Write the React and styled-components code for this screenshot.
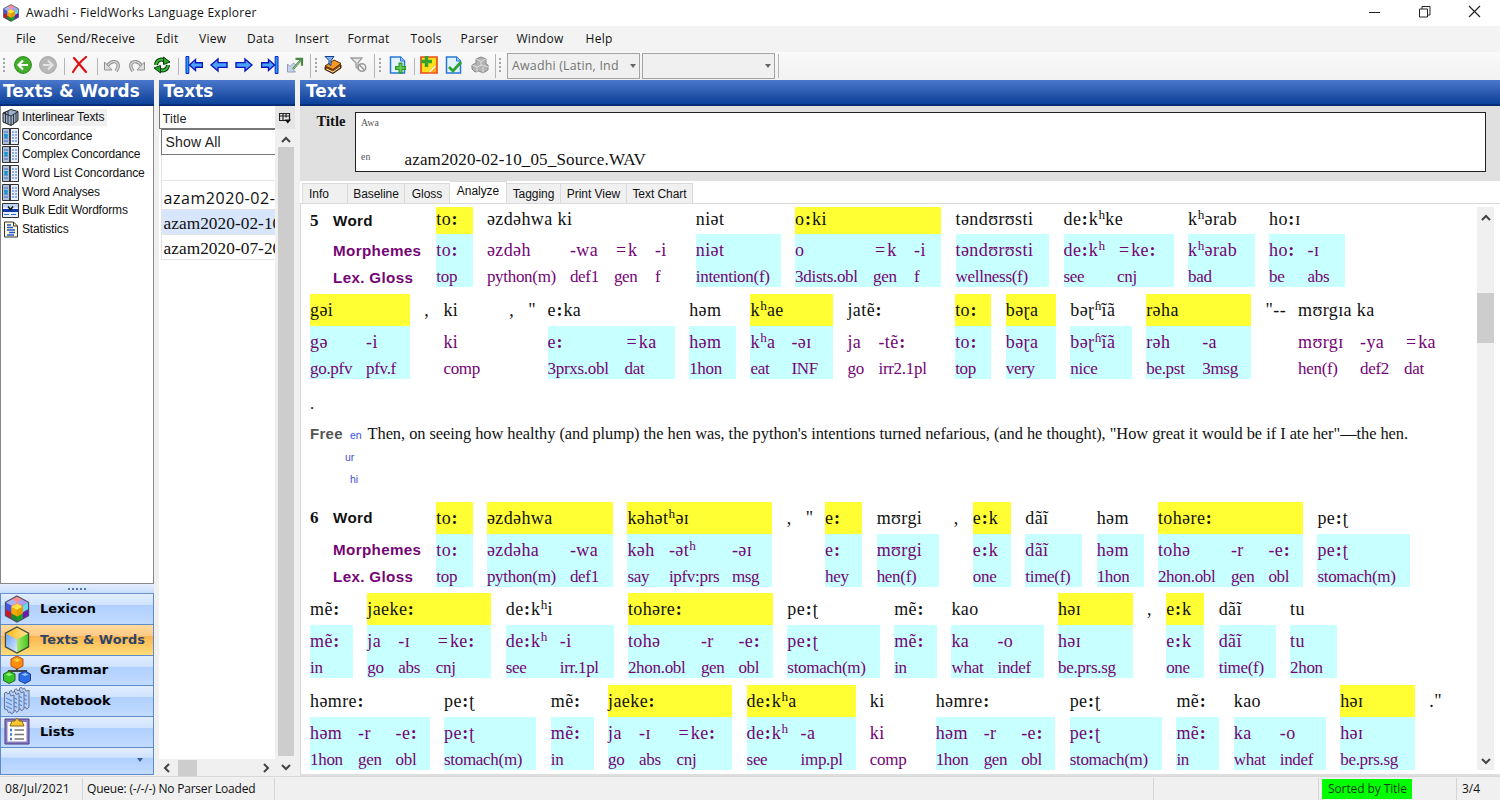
import React from "react";
import styled, { createGlobalStyle, css } from "styled-components";

const ui = '"Open Sans", "Noto Sans", sans-serif';
const sans = '"Liberation Sans", Arial, sans-serif';
const serif = '"Liberation Serif", "Times New Roman", serif';
const bold = '"DejaVu Sans", Verdana, sans-serif';

const Global = createGlobalStyle`
  * { box-sizing: border-box; }
  body { margin: 0; background: #f0f0f0; overflow: hidden; }
`;

const Window = styled.div`
  width: 1500px; height: 800px; display: flex; flex-direction: column;
  background: #f0f0f0; color: #111; overflow: hidden; white-space: nowrap;
`;
const TitleBar = styled.header`
  height: 26px; flex: none; display: flex; align-items: center; background: #fff;
  padding: 0 19px 0 2px; font: 12px/26px ${ui};
`;
const TitleText = styled.span`margin-left: 6px; flex: 1; letter-spacing: 0.28px;`;
const Controls = styled.div`display: flex; gap: 37px; align-items: center; margin-top: -3px;`;
const MenuBar = styled.nav`
  height: 26px; flex: none; display: flex; background: #f3f3f3; font: 12px/25px ${ui};
`;
const MenuItem = styled.span`
  width: ${(p) => p.$w}px; flex: none; letter-spacing: 0.28px;
`;
const Toolbar = styled.div`
  height: 28px; flex: none; display: flex; align-items: center; padding-left: 3px;
  background: linear-gradient(#fafafa, #f1f1f1);
`;
const Tool = styled.span`
  width: 18px; height: 18px; margin-left: ${(p) => p.$ml}px; margin-top: -2px; flex: none; display: flex;
  svg { display: block; }
`;
const Grip = styled.i`
  width: 2px; height: 16px; flex: none; margin-left: ${(p) => p.$ml || 0}px;
  background: repeating-linear-gradient(#a5a5a5 0 2px, transparent 2px 4px);
`;
const Rule = styled.i`
  width: 1px; height: ${(p) => p.$h || 17}px; flex: none; background: #b5b5b5; margin-left: ${(p) => p.$ml}px;
`;
const Combo = styled.div`
  width: 133px; height: 26px; margin-left: ${(p) => p.$ml}px; border: 1px solid #a3a3a3; background: #f0f0f0;
  display: flex; align-items: center; justify-content: space-between; padding: 0 3px 0 4px;
  font: 12.4px/20px ${ui}; color: #737373; letter-spacing: 0.2px;
`;
const Caret = styled.i`
  border: 3px solid transparent; border-top: 4px solid ${(p) => p.$c || "#666"}; border-bottom: 0;
`;

const Main = styled.main`flex: 1; min-height: 0; display: flex; gap: 5px;`;
const Column = styled.section`
  width: ${(p) => p.$w}px; flex: none; display: flex; flex-direction: column; min-height: 0;
`;
const PaneTitle = styled.h2`
  height: 26px; flex: none; margin: 0; padding: 0 0 2px ${(p) => p.$pl || 3}px; color: #fff;
  background: linear-gradient(#4a77cb, #2a59ae 50%, #0d419a 92%, #062f78 93%);
  font: bold 16.8px/23px ${bold}; letter-spacing: 0.1px;
`;

/* Left navigation */
const ToolList = styled.div`
  flex: none; height: 478px; background: #fff; border: 1px solid #888; border-top: 0; padding: 2px 0 0 1px;
`;
const ToolRow = styled.div`
  height: 18.7px; display: flex; align-items: center; font: 12px/17px ${sans};
  span { padding: 0 3px 0 3px; background: ${(p) => (p.$on ? "#f0f0f0" : "none")}; letter-spacing: ${(p) => p.$ls}px; }
`;
const NavGrip = styled.div`
  height: 10px; flex: none; background: linear-gradient(#e3efff, #c6dcfb); border-bottom: 1px solid #6d93c9;
  display: flex; justify-content: center; align-items: center; gap: 2px;
  i { width: 2px; height: 2px; background: #5577b5; }
`;
const NavButton = styled.div`
  height: ${(p) => p.$h || 30.8}px; flex: none; display: flex; align-items: center; padding-left: 2px;
  border: solid #5f8cc8; border-width: 0 1px 1px;
  background: ${(p) =>
    p.$on
      ? "linear-gradient(#ffdb9b, #fdc987 36%, #fbb550 38%, #ffdd78)"
      : "linear-gradient(#e2eeff, #cfe2ff 36%, #b0d0ff 38%, #c2dbff)"};
  color: ${(p) => (p.$on ? "#2d4466" : "#000")};
  font: bold 12.9px/28px ${bold};
  span { margin: 0 0 0 9px; letter-spacing: 0.08px; }
`;
const NavFooter = styled(NavButton)`justify-content: flex-end; padding: 0 10px 1px 0;`;

/* Text list */
const ListArea = styled.div`flex: 1; min-height: 0; display: flex; background: #f0f0f0;`;
const ListBody = styled.div`
  width: 116px; flex: none; background: #fff; display: flex; flex-direction: column; overflow: hidden;
`;
const ListHead = styled.div`
  height: 23px; flex: none; border-left: 1px solid #777; border-bottom: 1px solid #777; padding: 1px 0 0 3px;
  font: 12.6px/25px ${sans}; letter-spacing: 0.2px; color: #222;
`;
const ListFilter = styled.div`
  height: 26px; flex: none; margin-left: 2px; border: solid #777; border-width: 1px 0 1px 1px; padding-left: 4px;
  font: 14px/24px ${sans}; letter-spacing: 0.2px; color: #222;
`;
const ListItem = styled.div`
  height: ${(p) => p.$h || 25}px; flex: none; margin-left: 2px; border: solid #e4e4e4; border-width: 0 0 1px 1px; padding-left: 2px;
  background: ${(p) => (p.$on ? "#d8e6fc" : "#fff")};
  font: ${(p) => (p.$ui ? `16px/34px ${ui}` : `17.3px/27px ${serif}`)};
  letter-spacing: ${(p) => (p.$ui ? 0.55 : 0.05)}px; overflow: hidden;
`;
const ListSpace = styled.div`flex: 1;`;
const HScroll = styled.div`
  height: 17px; flex: none; background: #f0f0f0; display: flex; align-items: center; justify-content: space-between; padding: 0 4px 0 3px;
`;
const HThumb = styled.i`width: 19px; height: 16px; background: #cdcdcd; margin-right: 58px;`;
const ListSide = styled.div`flex: 1; display: flex; flex-direction: column; padding-left: 3px;`;
const ColumnButton = styled.div`
  height: 23px; flex: none; display: flex; align-items: center; justify-content: center; margin-left: -3px; background: #e6e6e6;
`;
const VScroll = styled.div`
  flex: ${(p) => (p.$stretch ? 1 : "none")}; width: ${(p) => p.$w || 16}px; background: #f0f0f0; display: flex; flex-direction: column; align-items: center;
  justify-content: space-between; padding: 6px 0 4px;
`;
const VThumb = styled.i`
  width: 100%; height: ${(p) => p.$h}px; background: #cdcdcd; margin: ${(p) => p.$m};
`;

/* Text pane */
const TitleArea = styled.div`
  height: 75px; flex: none; background: #e0e0e0; padding: 6px 14px 8px 0; display: flex;
`;
const FieldLabel = styled.b`width: 55px; padding-left: 16.5px; font: bold 14.6px/18px ${serif};`;
const FieldBox = styled.div`
  flex: 1; height: 60px; background: #fff; border: 1px solid #222; padding-left: 5px;
  display: flex; flex-direction: column; justify-content: space-between;
`;
const FieldLine = styled.div`
  height: ${(p) => p.$h}px; display: flex; align-items: center; font: 17px/22px ${serif}; letter-spacing: 0.15px;
  small { width: 43.5px; font-size: 9.8px; color: #555; margin-top: ${(p) => p.$mt || 0}px; }
`;
const Tabs = styled.div`height: 22px; flex: none; background: #fff; display: flex; align-items: flex-end; padding-left: 2px;`;
const Tab = styled.div`
  width: ${(p) => p.$w}px; height: ${(p) => (p.$on ? 22 : 20)}px; text-align: ${(p) => (p.$left ? "left" : "center")};
  padding-left: ${(p) => (p.$left ? 6 : 0)}px; letter-spacing: -0.05px;
  background: ${(p) => (p.$on ? "#fff" : "#f0f0f0")}; border: 1px solid #dadada; border-bottom: 0; border-left-width: ${(p) => (p.$left ? 1 : 0)}px;
  font: 12px/${(p) => (p.$on ? 19 : 20)}px ${sans};
`;
const Document = styled.div`
  flex: 1; min-height: 0; display: flex; background: #fff; border: 1px solid #dadada; border-right: 0; border-bottom: 2px solid #dedede; padding: 3px 6px 4px 9px;
`;
const Lines = styled.div`flex: 1; min-width: 0; display: flex; flex-direction: column;`;
const Line = styled.div`
  height: ${(p) => p.$h || 91.4}px; flex: none; display: flex; gap: 14.3px; align-items: flex-start;
`;
const Labels = styled.div`
  width: 112px; flex: none; display: grid; grid-template-columns: 23px 1fr;
  grid-template-rows: ${(p) => p.$top}px 33px 21px; align-items: center;
  font: bold 15.2px/20px ${sans}; color: #750475; letter-spacing: 0.35px;
  b { color: #111; }
  b:first-child { font: bold 17px/20px ${serif}; }
  span { grid-column: 2; }
`;
const Head = styled.div`
  height: ${(p) => p.$top}px; background: ${(p) => (p.$hot ? "#ffff33" : "none")};
  color: #111; font: 18px/${(p) => p.$top - (p.$top < 30 ? 3 : 0)}px ${serif}; letter-spacing: 0.4px;
`;
const Unit = styled.div`width: ${(p) => p.$w}px; flex: none;`;
const Analysis = styled.div`
  height: 53px; display: flex; background: ${(p) => (p.$fill ? "#c8ffff" : "none")}; color: #750475;
`;
const Morph = styled.div`
  width: ${(p) => (p.$w ? p.$w + "px" : "auto")}; flex: none;
  font: 18px/32px ${serif}; letter-spacing: 0.4px;
  div { font-size: 17px; line-height: 22px; letter-spacing: -0.3px; }
`;
const Length = styled.span`font-weight: bold; letter-spacing: 1px; margin-left: 0.5px;`;
const Raised = styled.span`font-size: 22px; line-height: 0; letter-spacing: 0;`;
const Clitic = styled.span`margin: 0 1.6px 0 2px;`;
const FreeLine = styled.div`
  height: ${(p) => p.$h}px; flex: none; display: flex; align-items: center; padding: 0 0 ${(p) => p.$pb || 0}px ${(p) => p.$pl || 0}px;
  font: 16.4px/20px ${serif}; color: #111;
  b { font: bold 15px/20px ${sans}; color: #555; width: 40px; flex: none; letter-spacing: 0.3px; }
  small { font: 10.5px/18px ${sans}; color: #3b4fd8; width: 17.5px; margin-top: 3px; flex: none; }
  span { letter-spacing: -0.04px; }
`;

const StatusBar = styled.footer`
  height: 24px; flex: none; border-top: 1px solid #d7d7d7; display: flex; align-items: center; background: #f0f0f0; font: 12px/22px ${ui};
`;
const Status = styled.span`
  width: ${(p) => (p.$w ? p.$w + "px" : "auto")}; flex: ${(p) => (p.$w ? "none" : 1)}; height: 22px;
  padding-left: ${(p) => p.$pl || 0}px; border-right: 1px solid #d5d5d5; letter-spacing: ${(p) => p.$ls || 0}px;
  ${(p) => p.$last && css`border-right: 0;`}
`;
const Sorted = styled.span`
  width: 90px; height: 20px; background: #00ff00; margin: 0 2px 0 3px; padding-left: 6px; font: 12px/20px ${ui}; letter-spacing: -0.1px; color: #143c14;
`;

/* Icons */
const Svg = ({ s = 18, w, h, children, v }) => (
  <svg width={w || s} height={h || s} viewBox={v || "0 0 18 18"} fill="none">{children}</svg>
);
const Chevron = ({ d }) => {
  const p = { up: "M1 7l4-4 4 4", down: "M1 3l4 4 4-4", left: "M7 1L3 5l4 4", right: "M3 1l4 4-4 4" }[d];
  return <svg width="10" height="10" viewBox="0 0 10 10" fill="none"><path d={p} stroke="#444" strokeWidth="2" /></svg>;
};
const Circle = ({ back }) => (
  <Svg>
    <circle cx="9" cy="9" r="8.4" fill={back ? "#43ad2c" : "#b8b8b8"} stroke={back ? "#2b8a1c" : "#a5a5a5"} />
    <path d={back ? "M14 9H5M9 4.5L4.500 9L9 13.500" : "M4 9h9M9 4.500L13.500 9L9 13.500"} stroke={back ? "#fff" : "#e4e4e4"} strokeWidth="2.200" />
  </Svg>
);
const Delete = () => <Svg><path d="M3 2l12 14M15 1C10 5 5 11 2 16" stroke="#e01010" strokeWidth="2.2" strokeLinecap="round" /></Svg>;
const Undo = ({ flip }) => (
  <Svg>
    <g transform={flip ? "matrix(-1 0 0 1 18 0)" : undefined}>
      <path d="M4 11C7 4.500 13 4.500 15 8C16 11 15 12 13 15" stroke="#929292" strokeWidth="3.400" />
      <path d="M4 11C7 4.500 13 4.500 15 8C16 11 15 12 13 15" stroke="#e0e0e0" strokeWidth="1.200" />
      <path d="M1.500 6v8h7.500z" fill="#dedede" stroke="#929292" />
    </g>
  </Svg>
);
const Refresh = () => (
  <Svg>
    <path d="M3 9C3.500 4 8 2.500 11.500 4.500M15 9C14.500 14 10 15.500 6.500 13.500" stroke="#0b3d0b" strokeWidth="4" />
    <path d="M3 9C3.500 4 8 2.500 11.500 4.500M15 9C14.500 14 10 15.500 6.500 13.500" stroke="#35bb35" strokeWidth="2" />
    <path d="M10.500 1v7.500L17 6zM7.500 17V9.500L1 12z" fill="#25a528" stroke="#0b3d0b" />
  </Svg>
);
const Arrow = ({ right, bar }) => (
  <Svg>
    <g transform={right ? "matrix(-1 0 0 1 18 0)" : undefined}>
      {bar && <path d="M1 .5h2.800v17H1z" fill="#1aa6f5" stroke="#0a1cc8" />}
      <path d={bar ? "M4.500 9l6-5.500v3.300h7v4.400h-7v3.300z" : "M1 9l7-6v3.600h9v4.800H8V15z"} fill="#4ba3ff" stroke="#0a14b8" strokeWidth="1.400" />
    </g>
  </Svg>
);
const Jump = () => (
  <Svg>
    <path d="M1.500 8v8h8l-2.500-2.500 3.500-4-3-2.500-3.500 3.500z" fill="#c5d4ea" stroke="#8d9db5" />
    <path d="M7 13L14.500 4.500M9.500 2.800h6.500v7" stroke="#4a8740" strokeWidth="2.200" />
    <path d="M7.500 12.500L14 5.200" stroke="#c7e0c0" strokeWidth="0.800" />
  </Svg>
);
const FilterBook = () => (
  <Svg>
    <path d="M1 11l9-5 7 3v3l-8 5.500-8-4z" fill="#8a4a08" stroke="#3a1c00" />
    <path d="M1 10L10 4l7 3.500-8 6z" fill="#f39a28" stroke="#5b2d00" /><path d="M2.500 13l6.500 3 7-5" stroke="#f5e3c0" />
    <path d="M1 .5h9L7 4.500v5l-2-1v-4z" fill="#7fb2f2" stroke="#16408c" />
  </Svg>
);
const FilterOff = () => (
  <Svg>
    <path d="M1 2h11L8 7v6l-2-2V7z" fill="#e5e5e5" stroke="#a0a0a0" strokeWidth="1.300" />
    <circle cx="12" cy="11.500" r="3.800" fill="#f4f4f4" stroke="#999" strokeWidth="1.500" /><path d="M9.500 9l5 5" stroke="#999" strokeWidth="1.500" />
  </Svg>
);
const Page = ({ check }) => (
  <Svg>
    <path d="M1.500 1h10l4 4v12h-14z" fill="#e4f2ff" stroke="#2478d8" strokeWidth="1.500" />
    <path d="M11.500 1v4h4" fill="#9cc8fa" stroke="#2478d8" />
    {check ? <path d="M4 11l4 4 8-9" stroke="#2fa52f" strokeWidth="2.800" /> : <path d="M11.500 6.500v11M6 12h11" stroke="#2f9c23" strokeWidth="4" />}
    {!check && <path d="M11.500 8v8M7.500 12h8" stroke="#6ed05c" strokeWidth="1.600" />}
  </Svg>
);
const InsertNote = () => (
  <Svg>
    <path d="M1 1h16v16H1z" fill="#ffe01a" stroke="#ea4c1a" strokeWidth="1.700" />
    <path d="M16 8L8 16h8z" fill="#ffac1c" /><path d="M15.500 10l-6 6" stroke="#fff" strokeWidth="1.300" />
    <path d="M6.500 0v11M1 5.500h11" stroke="#36a12c" strokeWidth="3.500" />
  </Svg>
);
const Cubes = () => (
  <Svg>
    <path d="M5 3l5-2 5 2v5l2 1v5l-5 3-4-2-4 1-3-3V9l4-2z" fill="#b3b3b3" stroke="#888" />
    <path d="M5 3l5 2.500L15 3M10 5.500v4M1 9l5 2 5-2 6 2M6 11v5M12 11v6" stroke="#dcdcdc" />
  </Svg>
);
const hexTop = "M14 1L26 7.500L14 14L2 7.500z", hexL = "M2 7.500L14 14V28L2 21.500z", hexR = "M26 7.500L14 14V28L26 21.500z";
const Hex = ({ size = 28 }) => (
  <Svg s={size} v="0 0 28 29">
    <path d={hexTop} fill="#ff8f8f" /><path d="M8 4.200L14 7.500L8 11L2 7.500z" fill="#a6b5f5" /><path d="M20 4.200l6 3.300-6 3.500-6-3.500z" fill="#a8a0f5" />
    <path d={hexL} fill="#4457dc" /><path d="M2 14.500l6 3.500v6.800l-6-3.300z" fill="#cc1628" /><path d="M8 18l6 3.200V28l-6-3.200z" fill="#1c8a2a" />
    <path d={hexR} fill="#17a02a" /><path d="M20 11l6-3.500v7L20 18z" fill="#6cd6f5" /><path d="M20 18l6-3.500v7l-6 3.300z" fill="#7017b8" />
    <path d="M14 9l6 3.200V19l-6 3.200L8 19v-6.800z" fill="#f5a800" /><path d="M14 9l6 3.200-6 3.300-6-3.300z" fill="#ffe14a" /><path d="M14 15.500v6.700l6-3.200v-6.800z" fill="#e79a00" />
    <path d="M14 1L26 7.500v14L14 28L2 21.500v-14z" stroke="#4d5068" strokeWidth="1.200" />
  </Svg>
);
const Cube = () => (
  <Svg s={28} v="0 0 28 29">
    <defs>
      <linearGradient id="cubeTop"><stop stopColor="#ffb70f" /><stop offset="1" stopColor="#ffe69a" /></linearGradient>
      <linearGradient id="cubeLeft" y2="1" x2="1"><stop stopColor="#699ff5" /><stop offset="1" stopColor="#dcecff" /></linearGradient>
      <linearGradient id="cubeRight"><stop stopColor="#a9e86a" /><stop offset="1" stopColor="#43c421" /></linearGradient>
    </defs>
    <path d={hexTop} fill="url(#cubeTop)" /><path d={hexL} fill="url(#cubeLeft)" /><path d={hexR} fill="url(#cubeRight)" />
    <path d="M14 1L26 7.500v14L14 28L2 21.500v-14z" stroke="#3e4a3a" strokeWidth="1.300" />
  </Svg>
);
const Grammar = () => (
  <Svg s={28} v="0 0 28 28">
    <path d="M14 10v5M6 19v-4h17v4" stroke="#444" strokeWidth="2.200" />
    <path d="M14 0l6 3v7l-6 3-6-3V3z" fill="#ff8b0f" stroke="#b85510" /><path d="M14 2l4 2-4 2-4-2z" fill="#ffd33b" />
    <path d="M6 15l6 3v6.500L6 27.500 0.500 24.500V18z" fill="#38c52a" stroke="#246818" /><path d="M6 17l3.500 1.500L6 20l-3.500-1.500z" fill="#9af27b" />
    <path d="M22 15l5.500 3v6.500L22 27.500l-6-3V18z" fill="#2f6de8" stroke="#173b91" /><path d="M22 17l3.500 1.500L22 20l-3.500-1.500z" fill="#8ec2ff" />
  </Svg>
);
const Notebook = () => (
  <Svg s={28} v="0 0 28 28">
    {[0, 1, 2, 3].map((i) => (
      <g key={i} transform={`translate(${(3 - i) * 5} ${(3 - i) * -1.6})`}>
        <path d="M1.500 6l2-1 1 2 2-1 1.500 3 3-1v17l-2.500 2-1-2-2 .5-1.500-3-2.500-.5z" fill="#b6d2fc" stroke="#67708c" strokeWidth="1" />
        <path d="M3 11l6 3M3 15l6 3M3 19l6 3" stroke="#558be0" strokeWidth="1.200" />
      </g>
    ))}
  </Svg>
);
const Clipboard = () => (
  <Svg s={28} v="0 0 28 28">
    <path d="M2 1h24v25H2z" fill="#8a7cc0" stroke="#4a3b82" /><path d="M4.500 4h19v19.500h-19z" fill="#fff" />
    <path d="M9 3h3c0-3 4-3 4 0h3l2 5H7z" fill="#f4c832" stroke="#8c6410" />
    <path d="M7 12h2M7 16.500h2M7 21h2" stroke="#3b78d8" strokeWidth="2.400" /><path d="M11.500 12H21M11.500 16.500H21M11.500 21H21" stroke="#777" strokeWidth="1.600" />
  </Svg>
);
const Books = () => (
  <Svg s={17} v="0 0 17 17">
    <path d="M1 4l8-3.500 7 2v9L9 16.500 1 13z" fill="#9db2ce" stroke="#222" /><path d="M1 4l8 3 7-4.500M9 7v9.500M3.500 3v11M6 2v13M11.500 5.500v10M14 4v9.500" stroke="#222" strokeWidth="0.900" />
  </Svg>
);
const Columns = () => (
  <Svg s={17} v="0 0 17 17">
    <path d="M.5.500h16v16H.500z" fill="#e8eefb" stroke="#333" /><path d="M1 1h6.500v15H1z" fill="#aebfd8" />
    <path d="M2 4h4M2 7h4M2 10h4M2 13h4M10 4h2M13 4h2M10 7h2M13 7h2M10 10h2M13 10h2M10 13h2M13 13h2" stroke="#3768c8" strokeWidth="1.200" /><path d="M8 1v15" stroke="#111" strokeWidth="1.600" /><path d="M2.500 6h3v4h-3z" fill="#0c9bd0" />
  </Svg>
);
const BulkEdit = () => (
  <Svg s={17} v="0 0 17 17">
    <path d="M.5 1.500h16v14H.500z" fill="#e8f1ff" stroke="#333" /><path d="M1 2h15v3.500H1z" fill="#bcd2f5" /><path d="M1 8.500h15" stroke="#123ca8" strokeWidth="3" /><path d="M6 4.500l2.500 3 2.500-3" stroke="#111" strokeWidth="1.500" /><path d="M2 12.500h5M9 12.500h5" stroke="#3768c8" />
  </Svg>
);
const Stats = () => (
  <Svg s={17} v="0 0 17 17">
    <path d="M2.500 1h9l4 4v11h-13z" fill="#fff9d8" stroke="#333" /><path d="M11.500 1v4h4" stroke="#333" /><path d="M5 4h4M5 6.500h6M5 9h8M7 11.500h6M5 14h7" stroke="#2554cc" strokeWidth="1.300" />
  </Svg>
);

/* w: cell width, t: word, m: [width, morpheme, gloss], hot: yellow word, plain: no analysis fill */
const u = (w, t, m, o = {}) => ({ w, t, m, ...o });
const Y = { hot: true }, P = { plain: true };
const to = u(36.3, "to:", [[0, "to:", "top"]], Y);
const pet = u(92.5, "pe:ʈ", [[0, "pe:ʈ", "stomach(m)"]]);
const me = u(43, "mẽ:", [[0, "mẽ:", "in"]]);
const ham = u(47, "həm", [[0, "həm", "1hon"]]);
const ek = u(38.3, "e:k", [[0, "e:k", "one"]], Y);
const dai = u(57, "dãĩ", [[0, "dãĩ", "time(f)"]]);
const comma = u(4.8, ",", []);
const quote = u(5, '"', []);
const ki = u(51.5, "ki", [[0, "ki", "comp"]], P);
const tohare = u(145.2, "tohəre:", [[73, "tohə", "2hon.obl"], [37.5, "-r", "gen"], [0, "-e:", "obl"]], Y);
const jaeke = u(124.2, "jaeke:", [[31, "ja", "go"], [37.5, "-ɪ", "abs"], [0, "=ke:", "cnj"]], Y);
const kao = u(92.2, "kao", [[46, "ka", "what"], [0, "-o", "indef"]]);
const hai = u(74.8, "həɪ", [[0, "həɪ", "be.prs.sg"]], Y);
const hamre = u(119.7, "həmre:", [[48, "həm", "1hon"], [37.5, "-r", "gen"], [0, "-e:", "obl"]]);

const line5a = [
  to,
  u(194.6, "əzdəhwa ki", [[83, "əzdəh", "python(m)"], [44, "-wa", "def1"], [41, "=k", "gen"], [0, "-i", "f"]], P),
  u(85, "niət", [[0, "niət", "intention(f)"]]),
  u(146.2, "o:ki", [[78, "o", "3dists.obl"], [41, "=k", "gen"], [0, "-i", "f"]], Y),
  u(93.7, "təndʊrʊsti", [[0, "təndʊrʊsti", "wellness(f)"]]),
  u(110.2, "de:kʰke", [[53.5, "de:kʰ", "see"], [0, "=ke:", "cnj"]]),
  u(66.7, "kʰərab", [[0, "kʰərab", "bad"]]),
  u(76, "ho:ɪ", [[38.5, "ho:", "be"], [0, "-ɪ", "abs"]]),
];
const line5b = [
  u(100, "gəi", [[56, "gə", "go.pfv"], [0, "-i", "pfv.f"]], Y), comma, ki, comma, quote,
  u(127.3, "e:ka", [[77, "e:", "3prxs.obl"], [0, "=ka", "dat"]]), ham,
  u(82.7, "kʰae", [[41, "kʰa", "eat"], [0, "-əɪ", "INF"]], Y),
  u(93.4, "jatẽ:", [[31, "ja", "go"], [0, "-tẽ:", "irr2.1pl"]], P), to,
  u(50.3, "bəɽa", [[0, "bəɽa", "very"]], Y), u(61.6, "bəɽʱĩã", [[0, "bəɽʱĩã", "nice"]]),
  u(105, "rəha", [[56, "rəh", "be.pst"], [0, "-a", "3msg"]], Y), u(18.2, '"--', []),
  u(140, "mʊrgɪa ka", [[62, "mʊrgɪ", "hen(f)"], [44, "-ya", "def2"], [0, "=ka", "dat"]], P),
];
const line6a = [
  to, u(126.2, "əzdəhwa", [[83, "əzdəha", "python(m)"], [0, "-wa", "def1"]], Y),
  u(145, "kəhətʰəɪ", [[41.5, "kəh", "say"], [63, "-ətʰ", "ipfv:prs"], [0, "-əɪ", "msg"]], Y), comma, quote,
  u(37.3, "e:", [[0, "e:", "hey"]], Y), u(62.7, "mʊrgi", [[0, "mʊrgi", "hen(f)"]]), comma, ek, dai, ham, tohare, pet,
];
const line6b = [
  me, jaeke, u(107.8, "de:kʰi", [[54, "de:kʰ", "see"], [0, "-i", "irr.1pl"]]), tohare, pet, me, kao, hai, comma, ek, dai,
  u(47.3, "tu", [[0, "tu", "2hon"]]),
];
const line6c = [
  hamre, pet, me, jaeke, u(109, "de:kʰa", [[54, "de:kʰ", "see"], [0, "-a", "imp.pl"]], Y), ki, hamre, pet, me, kao, hai, u(12, '."', []),
];

const marks = { ":": Length, "ʰ": Raised, "ʱ": Raised, "=": Clitic };
const Phonetic = ({ text }) =>
  text.split(/([:ʰʱ=])/).map((part, i) => {
    const Mark = marks[part];
    return Mark ? <Mark key={i}>{part}</Mark> : part;
  });
const WordUnit = ({ d, top }) => (
  <Unit $w={d.w}>
    <Head $hot={d.hot} $top={top}><Phonetic text={d.t} /></Head>
    {d.m.length > 0 && (
      <Analysis $fill={!d.plain}>
        {d.m.map(([w, m, g], i) => (
          <Morph key={i} $w={w}><Phonetic text={m} /><div>{g}</div></Morph>
        ))}
      </Analysis>
    )}
  </Unit>
);
const WordLine = ({ words, n, top = 32, h }) => (
  <Line $h={h}>
    {n && <Labels $top={top}><b>{n}</b><b>Word</b><span>Morphemes</span><span>Lex. Gloss</span></Labels>}
    {words.map((d, i) => <WordUnit key={i} d={d} top={top} />)}
  </Line>
);

const menus = [["File", 41], ["Send/Receive", 99], ["Edit", 43], ["View", 48], ["Data", 48], ["Insert", 52.5], ["Format", 63], ["Tools", 50], ["Parser", 56], ["Window", 69], ["Help", 40]];
const tools = [[Books, "Interlinear Texts", -0.12], [Columns, "Concordance", -0.1], [Columns, "Complex Concordance", -0.2], [Columns, "Word List Concordance", -0.12], [Columns, "Word Analyses", -0.15], [BulkEdit, "Bulk Edit Wordforms", -0.18], [Stats, "Statistics", -0.15]];
const areas = [[Hex, "Lexicon"], [Cube, "Texts & Words"], [Grammar, "Grammar"], [Notebook, "Notebook"], [Clipboard, "Lists"]];
const tabs = [["Info", 46], ["Baseline", 57], ["Gloss", 45], ["Analyze", 57], ["Tagging", 54], ["Print View", 66], ["Text Chart", 66]];

export default function App() {
  return (
    <Window>
      <Global />
      <TitleBar>
        <Hex size={18} />
        <TitleText>Awadhi - FieldWorks Language Explorer</TitleText>
        <Controls>
          <Svg s={13} v="0 0 13 13"><path d="M1 7.500h11" stroke="#222" /></Svg>
          <Svg s={13} v="0 0 13 13"><path d="M1.500 4h8v8h-8zM4 4V1.500h8V10H9.500" stroke="#222" /></Svg>
          <Svg s={13} v="0 0 13 13"><path d="M1 1l11 11M12 1L1 12" stroke="#222" strokeWidth="1.200" /></Svg>
        </Controls>
      </TitleBar>
      <MenuBar>
        <MenuItem $w={16} />
        {menus.map(([t, w]) => <MenuItem key={t} $w={w}>{t}</MenuItem>)}
      </MenuBar>
      <Toolbar>
        <Grip />
        <Tool $ml={9}><Circle back /></Tool>
        <Tool $ml={7}><Circle /></Tool>
        <Rule $ml={7} />
        <Tool $ml={6}><Delete /></Tool>
        <Rule $ml={8} />
        <Tool $ml={5}><Undo /></Tool>
        <Tool $ml={7}><Undo flip /></Tool>
        <Tool $ml={7}><Refresh /></Tool>
        <Rule $ml={7} />
        <Tool $ml={6}><Arrow bar /></Tool>
        <Tool $ml={7}><Arrow /></Tool>
        <Tool $ml={7}><Arrow right /></Tool>
        <Tool $ml={8}><Arrow right bar /></Tool>
        <Tool $ml={7}><Jump /></Tool>
        <Rule $ml={6} $h={24} />
        <Grip $ml={4} />
        <Tool $ml={7}><FilterBook /></Tool>
        <Tool $ml={8}><FilterOff /></Tool>
        <Rule $ml={6} $h={24} />
        <Grip $ml={4} />
        <Tool $ml={8}><Page /></Tool>
        <Rule $ml={7} />
        <Tool $ml={5}><InsertNote /></Tool>
        <Tool $ml={7}><Page check /></Tool>
        <Tool $ml={8}><Cubes /></Tool>
        <Rule $ml={6} $h={24} />
        <Grip $ml={3} />
        <Combo $ml={6}>Awadhi (Latin, Ind<Caret /></Combo>
        <Combo $ml={2}><span /><Caret /></Combo>
        <Rule $ml={3} $h={24} />
      </Toolbar>
      <Main>
        <Column $w={153.500}>
          <PaneTitle>Texts &amp; Words</PaneTitle>
          <ToolList>
            {tools.map(([I, t, ls], i) => <ToolRow key={t} $on={i === 0} $ls={ls}><I /><span>{t}</span></ToolRow>)}
          </ToolList>
          <NavGrip><i /><i /><i /><i /><i /></NavGrip>
          {areas.map(([I, t], i) => <NavButton key={t} $on={i === 1}><I /><span>{t}</span></NavButton>)}
          <NavFooter $h={27}><Caret $c="#3c5f96" /></NavFooter>
        </Column>
        <Column $w={136.500}>
          <PaneTitle $pl={5}>Texts</PaneTitle>
          <ListArea>
            <ListBody>
              <ListHead>Title</ListHead>
              <ListFilter>Show All</ListFilter>
              <ListItem $h={26} />
              <ListItem $h={29} $ui>azam2020-02-10</ListItem>
              <ListItem $on>azam2020-02-10</ListItem>
              <ListItem>azam2020-07-20</ListItem>
              <ListSpace />
              <HScroll><Chevron d="left" /><HThumb /><Chevron d="right" /></HScroll>
            </ListBody>
            <ListSide>
              <ColumnButton>
                <Svg s={12} v="0 0 12 12"><path d="M.5 1.500h10v7h-10zM.5 4h10M4 1.500v7M7 1.500v4" stroke="#222" strokeWidth="1.200" /><path d="M5.500 7.500h6.500l-3.200 4z" fill="#111" /></Svg>
              </ColumnButton>
              <VScroll $stretch><Chevron d="up" /><VThumb $h={609} $m="0 0 4px" /><Chevron d="down" /></VScroll>
            </ListSide>
          </ListArea>
        </Column>
        <Column $w={1200}>
          <PaneTitle $pl={6}>Text</PaneTitle>
          <TitleArea>
            <FieldLabel>Title</FieldLabel>
            <FieldBox>
              <FieldLine $h={19}><small>Awa</small></FieldLine>
              <FieldLine $h={23} $mt={-6}><small>en</small>azam2020-02-10_05_Source.WAV</FieldLine>
            </FieldBox>
          </TitleArea>
          <Tabs>
            {tabs.map(([t, w], i) => <Tab key={t} $w={w} $on={i === 3} $left={i === 0}>{t}</Tab>)}
          </Tabs>
          <Document>
            <Lines>
              <WordLine words={line5a} n="5" top={27} h={86.500} />
              <WordLine words={line5b} />
              <FreeLine $h={38}>.</FreeLine>
              <FreeLine $h={22}><b>Free</b><small>en</small><span>Then, on seeing how healthy (and plump) the hen was, the python's intentions turned nefarious, (and he thought), "How great it would be if I ate her"—the hen.</span></FreeLine>
              <FreeLine $h={21} $pl={35}><small>ur</small></FreeLine>
              <FreeLine $h={36} $pl={40} $pb={13}><small>hi</small></FreeLine>
              <WordLine words={line6a} n="6" />
              <WordLine words={line6b} />
              <WordLine words={line6c} h={84} />
            </Lines>
            <VScroll $w={17}><Chevron d="up" /><VThumb $h={50} $m="0 0 344px" /><Chevron d="down" /></VScroll>
          </Document>
        </Column>
      </Main>
      <StatusBar>
        <Status $w={83} $pl={5} $ls={0.1}>08/Jul/2021</Status>
        <Status $w={192} $pl={4} $ls={-0.2}>Queue: (-/-/-) No Parser Loaded</Status>
        <Status />
        <Status $w={165} />
        <Sorted>Sorted by Title</Sorted>
        <Status $w={43} $pl={0} />
        <Status $w={43} $pl={5} $last>3/4</Status>
      </StatusBar>
    </Window>
  );
}
